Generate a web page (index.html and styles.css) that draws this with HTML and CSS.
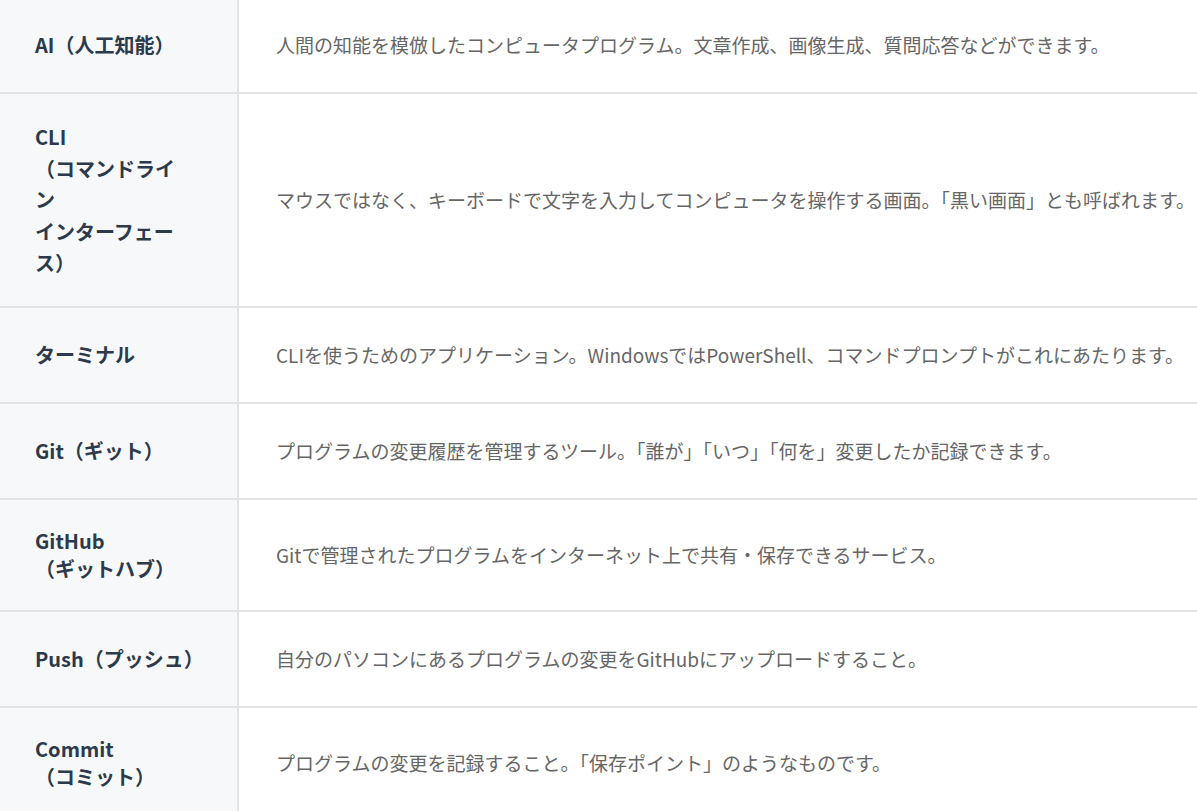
FILE: index.html
```html
<!DOCTYPE html>
<html lang="ja">
<head>
  <meta charset="UTF-8" />
  <meta name="viewport" content="width=device-width, initial-scale=1" />
  <title>用語集</title>
  <link rel="stylesheet" href="styles.css">
</head>
<body>
  <table class="glossary">
    <colgroup>
      <col class="term-col" />
      <col />
    </colgroup>
    <tbody>
      <tr>
        <th>AI（人工知能）</th>
        <td>人間の知能を模倣したコンピュータプログラム。文章作成、画像生成、質問応答などができます。</td>
      </tr>
      <tr>
        <th class="tall">CLI<br>（コマンドライ<br>ン<br>インターフェー<br>ス）</th>
        <td>マウスではなく、キーボードで文字を入力してコンピュータを操作する画面。「黒い画面」とも呼ばれます。</td>
      </tr>
      <tr>
        <th>ターミナル</th>
        <td>CLIを使うためのアプリケーション。WindowsではPowerShell、コマンドプロンプトがこれにあたります。</td>
      </tr>
      <tr>
        <th>Git（ギット）</th>
        <td>プログラムの変更履歴を管理するツール。「誰が」「いつ」「何を」変更したか記録できます。</td>
      </tr>
      <tr>
        <th>GitHub<br>（ギットハブ）</th>
        <td>Gitで管理されたプログラムをインターネット上で共有・保存できるサービス。</td>
      </tr>
      <tr>
        <th>Push（プッシュ）</th>
        <td>自分のパソコンにあるプログラムの変更をGitHubにアップロードすること。</td>
      </tr>
      <tr>
        <th>Commit<br>（コミット）</th>
        <td>プログラムの変更を記録すること。「保存ポイント」のようなものです。</td>
      </tr>
    </tbody>
  </table>
</body>
</html>
```

FILE: styles.css
```css
body {
  margin: 0;
  background: #fff;
  font-family: "Noto Sans CJK JP", "Noto Sans", sans-serif;
  overflow: hidden;
}
.glossary {
  border-collapse: collapse;
  table-layout: fixed;
  width: 100%;
  margin-top: -4px;
}
.term-col {
  width: 238px;
}
.glossary th,
.glossary td {
  border-top: 2px solid #e3e3e3;
  border-bottom: 2px solid #e3e3e3;
  padding: 27px 0;
  vertical-align: middle;
  text-align: left;
}
.glossary th {
  background: #f7f8fa;
  border-right: 2px solid #e3e3e3;
  padding-left: 35px;
  font-size: 20px;
  font-weight: 700;
  line-height: 28px;
  color: #2c3a4b;
}
.glossary th.tall {
  line-height: 31.6px;
}
.glossary td {
  padding-left: 37px;
  font-size: 19px;
  font-weight: 400;
  line-height: 40px;
  color: #666;
  white-space: nowrap;
}
```
